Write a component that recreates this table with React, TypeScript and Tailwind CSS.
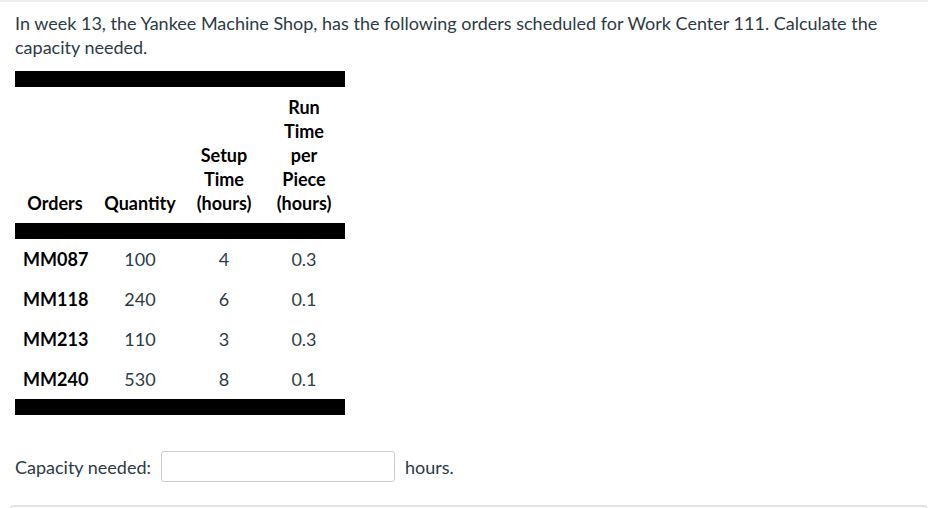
const rows = [
  { order: "MM087", qty: "100", setup: "4", run: "0.3" },
  { order: "MM118", qty: "240", setup: "6", run: "0.1" },
  { order: "MM213", qty: "110", setup: "3", run: "0.3" },
  { order: "MM240", qty: "530", setup: "8", run: "0.1" },
];

function OrdersTable() {
  return (
    <table className="w-[330px] table-fixed border-separate border-spacing-0 text-center">
      <colgroup>
        <col className="w-[80px]" />
        <col className="w-[90px]" />
        <col className="w-[78px]" />
        <col className="w-[82px]" />
      </colgroup>
      <thead>
        <tr className="align-bottom font-bold text-black">
          <th className="border-y-[16px] border-black px-2 py-2">Orders</th>
          <th className="border-y-[16px] border-black px-2 py-2">Quantity</th>
          <th className="border-y-[16px] border-black px-2 py-2">
            Setup Time (hours)
          </th>
          <th className="border-y-[16px] border-black px-2 py-2">
            Run Time per Piece (hours)
          </th>
        </tr>
      </thead>
      <tbody>
        {rows.map((r, i) => {
          const last = i === rows.length - 1;
          const cell = last
            ? "border-b-[16px] border-black px-2 py-2"
            : "px-2 py-2";
          return (
            <tr key={r.order}>
              <td className={cell + " font-bold text-black"}>{r.order}</td>
              <td className={cell}>{r.qty}</td>
              <td className={cell}>{r.setup}</td>
              <td className={cell}>{r.run}</td>
            </tr>
          );
        })}
      </tbody>
    </table>
  );
}

export default function App() {
  return (
    <div className="h-[508px] w-[938px] overflow-hidden bg-white font-['Lato','Liberation_Sans',sans-serif] text-[18px] leading-6 text-[#2d3b45]">
      <div className="mr-[10px] h-[3px] border-t-2 border-[#eeeeee]" />
      <div className="px-[15px]">
        <p className="mt-[8px] w-[880px]">
          In week 13, the Yankee Machine Shop, has the following orders
          scheduled for Work Center 111. Calculate the capacity needed.
        </p>
        <div className="mt-3">
          <OrdersTable />
        </div>
        <div className="mt-[36px] flex items-center gap-[10px]">
          <span>Capacity needed:</span>
          <input
            type="text"
            className="h-[31px] w-[234px] rounded-[3px] border border-[#c7cdd1] bg-white px-2 outline-none"
          />
          <span>hours.</span>
        </div>
      </div>
      <div className="mx-[10px] mt-[23px] h-10 rounded-t-[4px] border-x border-t-2 border-[#e2e2e2] bg-white" />
    </div>
  );
}
